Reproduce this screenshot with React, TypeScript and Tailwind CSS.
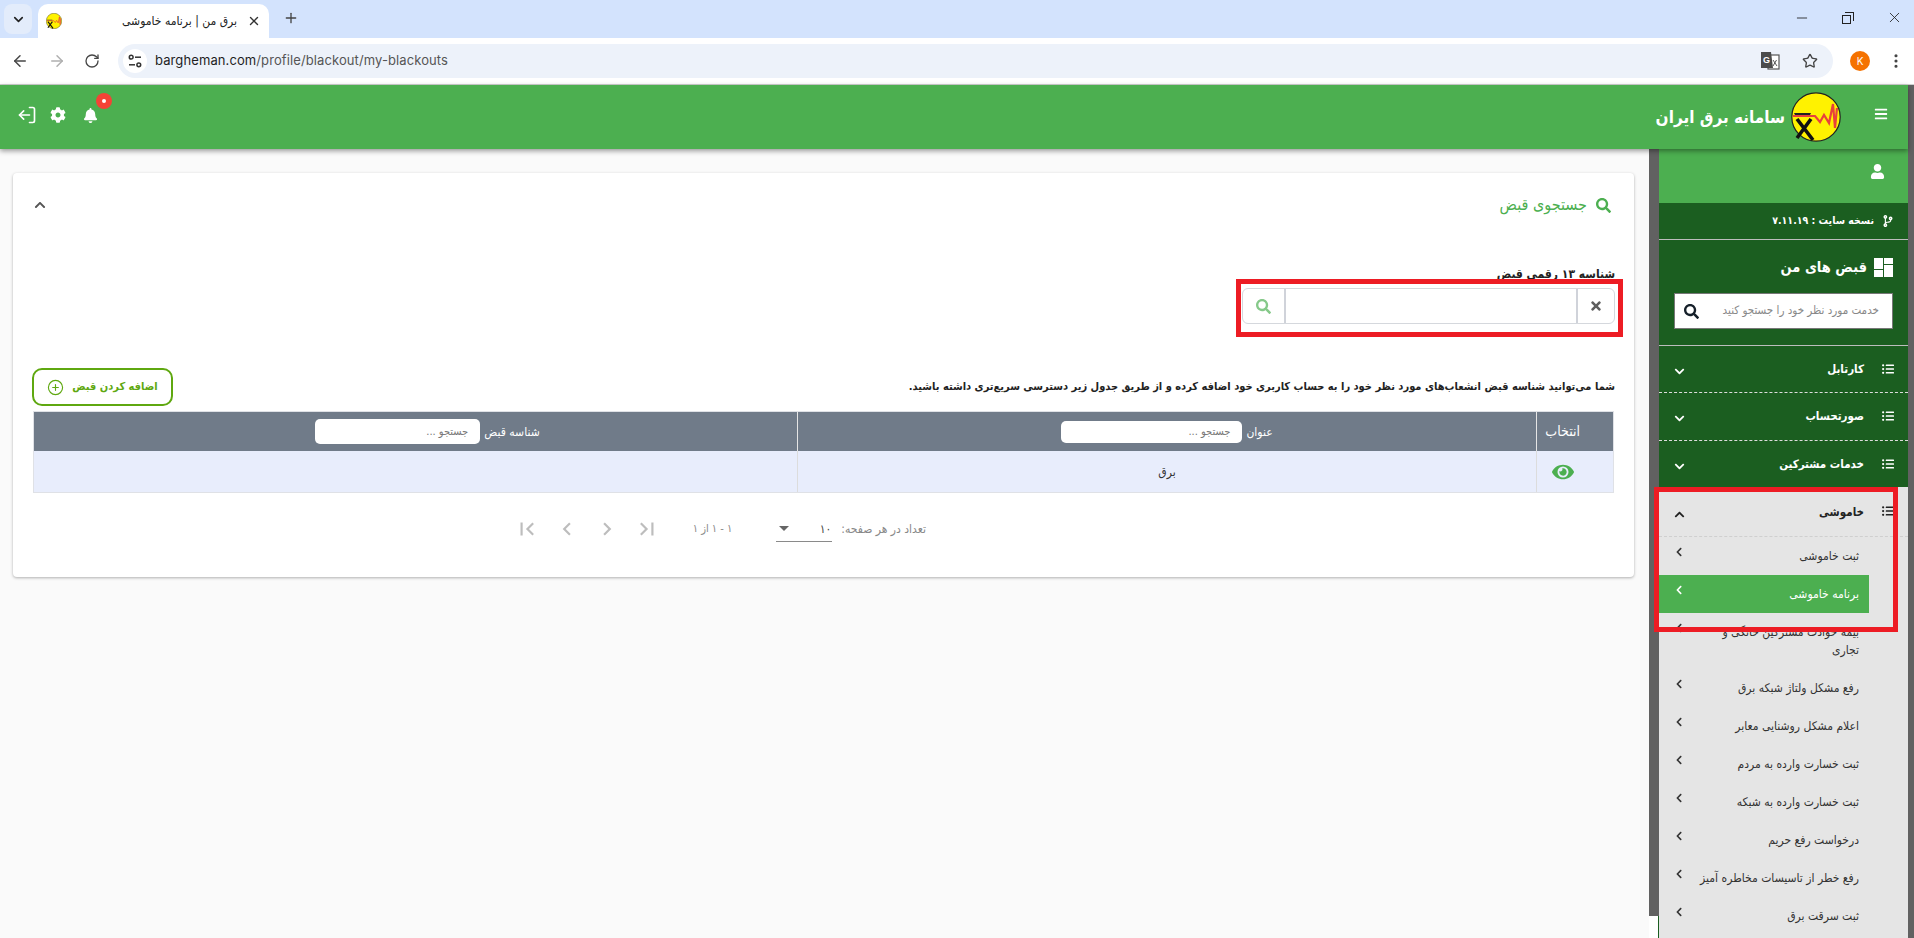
import React from "react";
import { ArrowLeft, ArrowRight, RotateCw, Star, EllipsisVertical, ChevronDown, X, Plus, Minus, LogOut, CirclePlus } from "lucide-react";
import { FaSearch, FaBell, FaCog, FaUser, FaBars, FaListUl, FaChevronDown, FaChevronUp, FaChevronLeft, FaTimes, FaEye, FaCodeBranch } from "react-icons/fa";
import { MdFirstPage, MdLastPage, MdChevronLeft, MdChevronRight } from "react-icons/md";

const Logo = ({ size }: { size: number }) => (
  <svg width={size} height={size} viewBox="0 0 50 50">
    <circle cx="25" cy="25" r="24.2" fill="#fff200" stroke="#222" strokeWidth="1.2" />
    <path d="M6 27 L22 48 M20 27 L6 46" stroke="#111" strokeWidth="3.6" fill="none" />
    <path d="M2 24 H24 L29 30 L33 23 L38 31 L42 12 L44 36 L46 16" fill="none" stroke="#e8413c" strokeWidth="2.2" />
    <path d="M3 21 H20 L19 23 H4Z" fill="#222" />
  </svg>
);

const TuneIcon = () => (
  <svg width="14" height="14" viewBox="0 0 14 14" fill="none" stroke="#333" strokeWidth="1.5">
    <circle cx="3.2" cy="3.2" r="1.9" />
    <path d="M7 3.2 H13" />
    <path d="M1 10.8 H7" />
    <circle cx="10.8" cy="10.8" r="1.9" />
  </svg>
);

const TranslateIcon = () => (
  <svg width="20" height="20" viewBox="0 0 20 20">
    <rect x="8" y="4" width="11" height="14" fill="#fff" stroke="#555" strokeWidth="1.2" />
    <path d="M1 1 H11 L13 17 H1Z" fill="#4b4b4b" />
    <text x="3" y="12" fontSize="9" fontWeight="700" fill="#fff" fontFamily="Liberation Sans, sans-serif">G</text>
    <path d="M13 9 L17 15 M16.5 9 L13 15" stroke="#555" strokeWidth="1" />
  </svg>
);

const menuHeads = [
  { t: "کارتابل", h: "h-[47px]" },
  { t: "صورتحساب", h: "h-[48px]" },
  { t: "خدمات مشترکین", h: "h-[46px]" },
];

const items = [
  "ثبت خاموشی",
  "برنامه خاموشی",
  "بیمه حوادث مشترکین خانگی و تجاری",
  "رفع مشکل ولتاژ شبکه برق",
  "اعلام مشکل روشنایی معابر",
  "ثبت خسارت وارده به مردم",
  "ثبت خسارت وارده به شبکه",
  "درخواست رفع حریم",
  "رفع خطر از تاسیسات مخاطره آمیز",
  "ثبت سرقت برق",
];

export default function App() {
  return (
    <div className="relative w-[1914px] h-[938px] overflow-hidden bg-[#fafafa] flex flex-col font-['DejaVu_Sans_Condensed','DejaVu_Sans',sans-serif]">
      {/* window strip */}
      <div className="h-[38px] bg-[#d3e3fd] flex items-end shrink-0">
        <div className="ml-1 mb-[4px] w-[28px] h-[30px] rounded-lg bg-[#e3ecfb] flex items-center justify-center">
          <ChevronDown size={15} strokeWidth={2.6} className="text-[#222]" />
        </div>
        <div className="ml-[6px] w-[231px] h-[34px] bg-white rounded-t-[10px] flex items-center pl-2">
          <Logo size={16} />
          <div dir="rtl" className="ml-[58px] w-[117px] text-[12px] text-[#222] whitespace-nowrap">برق من | برنامه خاموشی</div>
          <X size={14} strokeWidth={2.4} className="ml-[10px] text-[#333]" />
        </div>
        <div className="ml-[14px] mb-[12px]"><Plus size={16} strokeWidth={2} className="text-[#444]" /></div>
        <div className="flex-1" />
        <div className="flex items-center gap-[30px] mb-[12px] mr-[11px] text-[#222]">
          <Minus size={16} strokeWidth={1.3} />
          <div className="relative w-[16px] h-[16px]">
            <div className="absolute left-[2px] bottom-[2px] w-[9px] h-[9px] border border-[#222]" />
            <div className="absolute left-[5px] top-[2px] w-[9px] h-[9px] border-t border-r border-[#222]" />
          </div>
          <X size={17} strokeWidth={1.2} />
        </div>
      </div>
      {/* toolbar */}
      <div className="h-[47px] bg-white flex items-center shrink-0 border-b border-[#d0d0d0] pl-[11px]">
        <ArrowLeft size={18} strokeWidth={2} className="text-[#474747]" />
        <ArrowRight size={18} strokeWidth={2} className="ml-[19px] text-[#b0b0b0]" />
        <RotateCw size={16} strokeWidth={2} className="ml-[18px] text-[#474747]" />
        <div className="ml-[18px] w-[1715px] h-[34px] rounded-full bg-[#edf2fa] flex items-center pl-[5px]">
          <div className="w-[24px] h-[24px] rounded-full bg-white flex items-center justify-center">
            <TuneIcon />
          </div>
          <div className="ml-[8px] text-[13px] text-[#1f1f1f] font-['Inter',sans-serif] tracking-[0.1px]">
            bargheman.com<span className="text-[#555]">/profile/blackout/my-blackouts</span>
          </div>
          <div className="flex-1" />
          <TranslateIcon />
          <Star size={16} strokeWidth={2} className="ml-[22px] mr-[15px] text-[#444]" />
        </div>
        <div className="ml-[17px] w-[20px] h-[20px] rounded-full bg-[#f57200] flex items-center justify-center text-white text-[10px] font-['Inter',sans-serif]">K</div>
        <EllipsisVertical size={18} strokeWidth={2.2} className="ml-[17px] text-[#444]" />
      </div>
      {/* app area */}
      <div className="relative flex-1 min-h-0 flex flex-col">
        <div className="flex shrink-0 relative z-10 bg-[#616161]">
          <div className="h-[64px] w-[1908px] bg-[#4caf50] shadow-[0_2px_5px_rgba(0,0,0,0.4)] flex items-center text-white pl-[17px]">
            <div className="flex items-center -mt-[4px]">
              <LogOut size={20} strokeWidth={2} className="-scale-x-100" />
              <FaCog size={16} className="ml-[13px]" />
              <div className="relative ml-[17px]">
                <FaBell size={15} />
                <div className="absolute -top-[15px] left-[13px] w-[16px] h-[16px] rounded-full bg-[#f44336] flex items-center justify-center">
                  <div className="w-[4px] h-[4px] rounded-full bg-white" />
                </div>
              </div>
            </div>
            <div className="flex-1" />
            <div dir="rtl" className="text-[17px] font-bold leading-none whitespace-nowrap">سامانه برق ایران</div>
            <div className="ml-[6px]"><Logo size={50} /></div>
            <FaBars size={14} className="ml-[33px] mr-[20px] -mt-[6px]" />
          </div>
          <div className="flex-1" />
        </div>
        <div className="flex-1 min-h-0 flex">
          {/* main */}
          <div className="flex-1 min-w-0 pl-[13px] pr-[15px] pt-[24px]">
            <div dir="rtl" className="bg-white h-[404px] rounded-[4px] shadow-[0_1px_3px_rgba(0,0,0,0.3)] pt-[22px] px-[19px]">
              <div className="flex items-center justify-between h-[20px] text-[#4caf50] pr-[4px]">
                <div className="flex items-center gap-[9px]">
                  <FaSearch size={15} />
                  <span className="text-[16px] leading-none">جستجوی قبض</span>
                </div>
                <FaChevronUp size={12} className="text-[#555] ml-[2px]" />
              </div>
              <div className="mt-[47px] h-[24px] text-[12px] font-bold text-[#222] leading-[24px] whitespace-nowrap">شناسه ۱۳ رقمی قبض</div>
              <div className="mt-[2px] w-[373px] h-[36px] border border-[#d5d8dd] rounded-[6px] flex overflow-hidden">
                <div className="w-[36px] flex items-center justify-center text-[#5f5f5f]"><FaTimes size={14} /></div>
                <div className="flex-1 border-x-2 border-[#d0d3da]" />
                <div className="w-[41px] flex items-center justify-center text-[#86c98a]"><FaSearch size={15} /></div>
              </div>
              <div className="mt-[44px] h-[38px] flex items-center justify-between">
                <div className="text-[11px] font-bold text-[#222] whitespace-nowrap">شما می‌توانید شناسه قبض انشعاب‌های مورد نظر خود را به حساب کاربری خود اضافه کرده و از طریق جدول زیر دسترسی سریع‌تری داشته باشید.</div>
                <div className="w-[141px] h-[38px] border-2 border-[#5fa810] rounded-[10px] flex items-center justify-center gap-[8px] text-[#5fa810] text-[11px] font-bold">
                  <span className="whitespace-nowrap">اضافه کردن قبض</span>
                  <CirclePlus size={17} strokeWidth={1.6} />
                </div>
              </div>
              <div className="mt-[5px] mx-[1px] border border-[#dfe1e6]">
                <div className="h-[39px] bg-[#707b89] text-white text-[12px] flex">
                  <div className="w-[77px] flex items-center justify-start pr-[33px] border-l border-[#e5e5e5] text-[14px] whitespace-nowrap">انتخاب</div>
                  <div className="w-[739px] flex items-center justify-center gap-[4px] border-l border-[#e5e5e5]">
                    <span>عنوان</span>
                    <div className="w-[181px] h-[22px] bg-white rounded-[5px] text-[#777] text-[11px] px-[12px] leading-[22px]">جستجو ...</div>
                  </div>
                  <div className="flex-1 flex items-center justify-center gap-[4px] pl-[24px]">
                    <span>شناسه قبض</span>
                    <div className="w-[165px] h-[25px] bg-white rounded-[5px] text-[#777] text-[11px] px-[12px] leading-[25px]">جستجو ...</div>
                  </div>
                </div>
                <div className="h-[41px] bg-[#e8edfc] text-[12px] text-[#333] flex">
                  <div className="w-[77px] flex items-center justify-start pr-[39px] border-l border-[#dcdcdc] text-[#4caf50]"><FaEye size={22} className="shrink-0" /></div>
                  <div className="w-[739px] flex items-center justify-center border-l border-[#dcdcdc]">برق</div>
                  <div className="flex-1" />
                </div>
              </div>
              <div className="mt-[23px] h-[26px] flex items-center justify-start pr-[689px] text-[12px] text-[#888]">
                <span className="whitespace-nowrap">تعداد در هر صفحه:</span>
                <div className="mr-[9px] w-[56px] h-[25px] border-b border-[#8a8a8a] flex items-center justify-between pl-[3px] pr-[1px] text-[#444]">
                  <span>۱۰</span>
                  <span className="w-0 h-0 border-x-[5px] border-x-transparent border-t-[5px] border-t-[#666]" />
                </div>
                <span className="mr-[44px] whitespace-nowrap text-[11px]">۱ - ۱ از ۱</span>
                <div className="mr-[33px] flex items-center text-[#bdbdbd] gap-[14px]" dir="ltr">
                  <MdFirstPage size={26} />
                  <MdChevronLeft size={26} />
                  <MdChevronRight size={26} />
                  <MdLastPage size={26} />
                </div>
              </div>
            </div>
          </div>
          {/* sidebar */}
          <div dir="rtl" className="w-[265px] shrink-0 flex">
            <div className="w-[6px] shrink-0 bg-[#616161]" />
            <div className="w-[249px] shrink-0 flex flex-col bg-[#e5e5e5]">
              <div className="h-[54px] shrink-0 bg-[#4caf50] text-white pr-[23px] pt-[15px]"><FaUser size={15} /></div>
              <div className="bg-[#1b5e20] text-white shrink-0">
                <div className="h-[37px] border-b border-[#bdbdbd] flex items-center pr-[14px] gap-[8px] text-[10.5px] font-bold">
                  <FaCodeBranch size={12} />
                  <span>نسخه سایت : ۷.۱۱.۱۹</span>
                </div>
                <div className="h-[106px] border-b border-[#bdbdbd] px-[15px] pt-[17px]">
                  <div className="flex items-center gap-[7px] text-[14.5px] font-bold leading-[20px]">
                    <svg width="19" height="19" viewBox="0 0 19 19" fill="#fff"><rect width="9" height="11" /><rect x="10" width="9" height="6" /><rect y="12" width="9" height="7" /><rect x="10" y="7" width="9" height="12" /></svg>
                    <span>قبض های من</span>
                  </div>
                  <div className="mt-[16px] h-[36px] bg-white border border-[#777] flex items-center justify-between pr-[13px] pl-[9px] text-[11.5px] text-[#888]">
                    <span className="whitespace-nowrap">خدمت مورد نظر خود را جستجو کنید</span>
                    <FaSearch size={15} className="text-[#16202a]" />
                  </div>
                </div>
                {menuHeads.map((m, i) => (
                  <div key={m.t} className={`${m.h} ${i < 2 ? "border-b border-dashed border-[#ddd]" : ""} flex justify-between pr-[14px] pl-[15px] pt-[16px] text-[11.5px] font-bold`}>
                    <div className="flex items-start gap-[18px]">
                      <FaListUl size={12} className="mt-[1px]" />
                      <span className="leading-[14px]">{m.t}</span>
                    </div>
                    <FaChevronDown size={11} className="mt-[4px]" />
                  </div>
                ))}
              </div>
              <div className="h-[50px] shrink-0 border-b border-dashed border-[#cfcfcf] flex justify-between pr-[14px] pl-[15px] pt-[18px] text-[11.5px] font-bold text-[#222]">
                <div className="flex items-start gap-[18px]">
                  <FaListUl size={12} />
                  <span className="leading-[14px]">خاموشی</span>
                </div>
                <FaChevronUp size={11} className="mt-[4px]" />
              </div>
              <div className="flex-1 min-h-0 overflow-hidden">
                {items.map((t, i) => (
                  <div key={t} className={`mr-[39px] pr-[10px] py-[10px] pl-[15px] flex justify-between gap-[14px] text-[12px] leading-[18px] ${i === 1 ? "bg-[#4caf50] text-white" : "text-[#333]"}`}>
                    <span>{t}</span>
                    <FaChevronLeft size={10} className="shrink-0" />
                  </div>
                ))}
              </div>
            </div>
            <div className="w-[10px] shrink-0 flex flex-col">
              <div className="flex-1 bg-[#616161]" />
              <div className="h-[22px] bg-white border-r border-[#1b5e20]" />
            </div>
          </div>
        </div>
      </div>
      {/* annotation overlays */}
      <div className="absolute left-[1236px] top-[279px] w-[387px] h-[58px] border-[5px] border-[#ed1c24] z-20" />
      <div className="absolute left-[1654px] top-[487px] w-[244px] h-[145px] border-[5px] border-[#ed1c24] z-20" />
    </div>
  );
}
